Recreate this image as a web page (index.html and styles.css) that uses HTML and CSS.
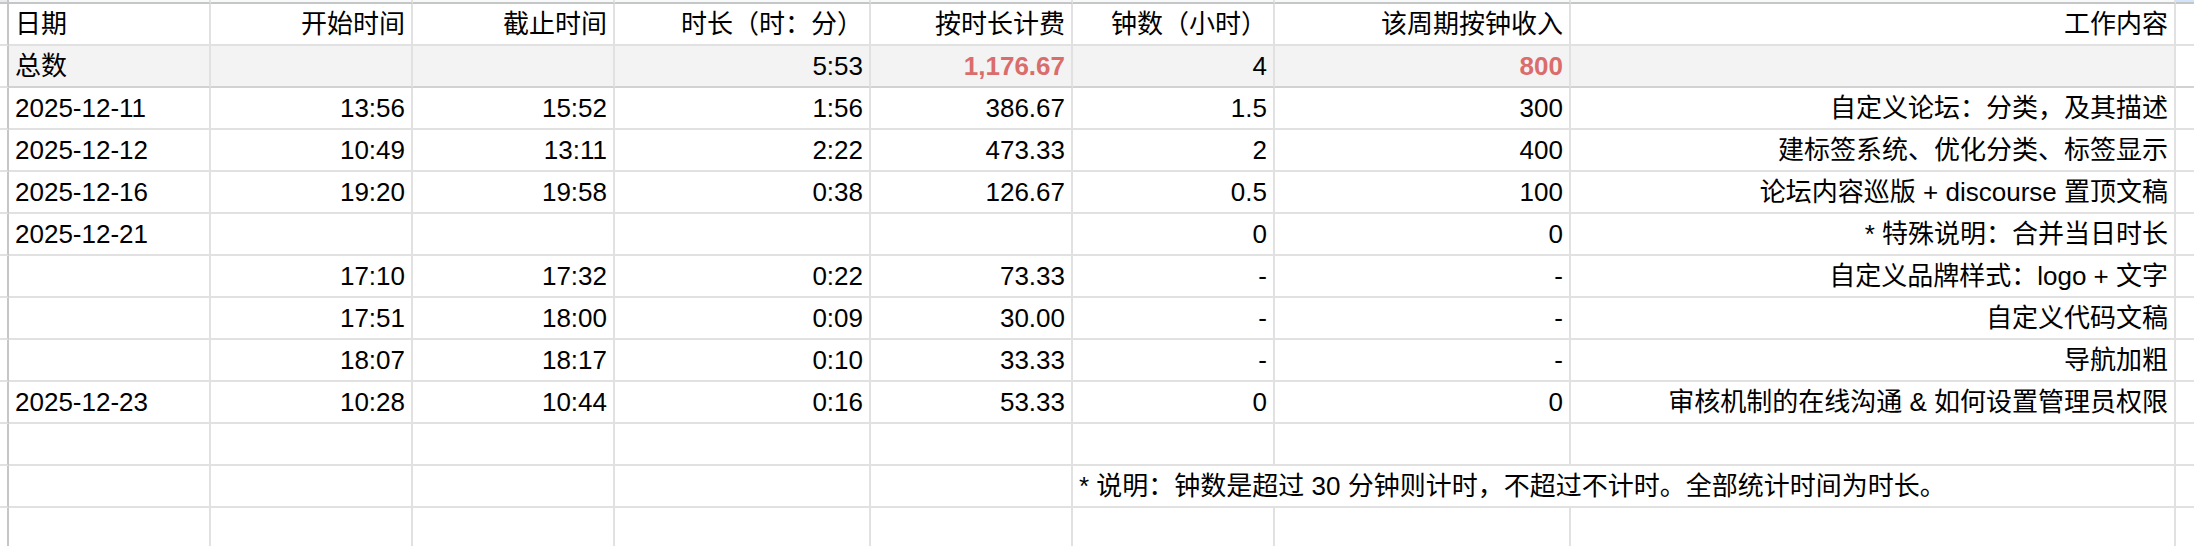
FILE: index.html
```html
<!DOCTYPE html>
<html lang="zh-CN">
<head>
<meta charset="utf-8">
<title>工时表</title>
<link rel="stylesheet" href="styles.css">
</head>
<body>
<div class="sheet">
  <div class="row colhead">
    <div class="ch corner"></div>
    <div class="ch"></div><div class="ch"></div><div class="ch"></div><div class="ch"></div>
    <div class="ch"></div><div class="ch"></div><div class="ch"></div><div class="ch"></div>
    <div class="ch sel"></div>
  </div>

  <div class="row">
    <div class="rh"></div>
    <div class="c">日期</div>
    <div class="c r">开始时间</div>
    <div class="c r">截止时间</div>
    <div class="c r">时长（时：分）</div>
    <div class="c r">按时长计费</div>
    <div class="c r">钟数（小时）</div>
    <div class="c r">该周期按钟收入</div>
    <div class="c r">工作内容</div>
    <div class="c x"></div>
  </div>

  <div class="row total">
    <div class="rh"></div>
    <div class="c g">总数</div>
    <div class="c g r"></div>
    <div class="c g r"></div>
    <div class="c g r">5:53</div>
    <div class="c g r hl">1,176.67</div>
    <div class="c g r">4</div>
    <div class="c g r hl">800</div>
    <div class="c g r"></div>
    <div class="c x"></div>
  </div>

  <div class="row">
    <div class="rh"></div>
    <div class="c">2025-12-11</div>
    <div class="c r">13:56</div>
    <div class="c r">15:52</div>
    <div class="c r">1:56</div>
    <div class="c r">386.67</div>
    <div class="c r">1.5</div>
    <div class="c r">300</div>
    <div class="c r">自定义论坛：分类，及其描述</div>
    <div class="c x"></div>
  </div>

  <div class="row">
    <div class="rh"></div>
    <div class="c">2025-12-12</div>
    <div class="c r">10:49</div>
    <div class="c r">13:11</div>
    <div class="c r">2:22</div>
    <div class="c r">473.33</div>
    <div class="c r">2</div>
    <div class="c r">400</div>
    <div class="c r">建标签系统、优化分类、标签显示</div>
    <div class="c x"></div>
  </div>

  <div class="row">
    <div class="rh"></div>
    <div class="c">2025-12-16</div>
    <div class="c r">19:20</div>
    <div class="c r">19:58</div>
    <div class="c r">0:38</div>
    <div class="c r">126.67</div>
    <div class="c r">0.5</div>
    <div class="c r">100</div>
    <div class="c r">论坛内容巡版 + discourse 置顶文稿</div>
    <div class="c x"></div>
  </div>

  <div class="row">
    <div class="rh"></div>
    <div class="c">2025-12-21</div>
    <div class="c r"></div>
    <div class="c r"></div>
    <div class="c r"></div>
    <div class="c r"></div>
    <div class="c r">0</div>
    <div class="c r">0</div>
    <div class="c r">* 特殊说明：合并当日时长</div>
    <div class="c x"></div>
  </div>

  <div class="row">
    <div class="rh"></div>
    <div class="c"></div>
    <div class="c r">17:10</div>
    <div class="c r">17:32</div>
    <div class="c r">0:22</div>
    <div class="c r">73.33</div>
    <div class="c r">-</div>
    <div class="c r">-</div>
    <div class="c r">自定义品牌样式：logo + 文字</div>
    <div class="c x"></div>
  </div>

  <div class="row">
    <div class="rh"></div>
    <div class="c"></div>
    <div class="c r">17:51</div>
    <div class="c r">18:00</div>
    <div class="c r">0:09</div>
    <div class="c r">30.00</div>
    <div class="c r">-</div>
    <div class="c r">-</div>
    <div class="c r">自定义代码文稿</div>
    <div class="c x"></div>
  </div>

  <div class="row">
    <div class="rh"></div>
    <div class="c"></div>
    <div class="c r">18:07</div>
    <div class="c r">18:17</div>
    <div class="c r">0:10</div>
    <div class="c r">33.33</div>
    <div class="c r">-</div>
    <div class="c r">-</div>
    <div class="c r">导航加粗</div>
    <div class="c x"></div>
  </div>

  <div class="row">
    <div class="rh"></div>
    <div class="c">2025-12-23</div>
    <div class="c r">10:28</div>
    <div class="c r">10:44</div>
    <div class="c r">0:16</div>
    <div class="c r">53.33</div>
    <div class="c r">0</div>
    <div class="c r">0</div>
    <div class="c r">审核机制的在线沟通 &amp; 如何设置管理员权限</div>
    <div class="c x"></div>
  </div>

  <div class="row">
    <div class="rh"></div>
    <div class="c"></div><div class="c"></div><div class="c"></div><div class="c"></div>
    <div class="c"></div><div class="c"></div><div class="c"></div><div class="c"></div>
    <div class="c x"></div>
  </div>

  <div class="row">
    <div class="rh"></div>
    <div class="c"></div><div class="c"></div><div class="c"></div><div class="c"></div>
    <div class="c"></div>
    <div class="c note">* 说明：钟数是超过 30 分钟则计时，不超过不计时。全部统计时间为时长。</div>
    <div class="c x"></div>
  </div>

  <div class="row">
    <div class="rh"></div>
    <div class="c"></div><div class="c"></div><div class="c"></div><div class="c"></div>
    <div class="c"></div><div class="c"></div><div class="c"></div><div class="c"></div>
    <div class="c x"></div>
  </div>
</div>
</body>
</html>
```

FILE: styles.css
```css
* {
  box-sizing: border-box;
}

html, body {
  margin: 0;
  padding: 0;
  background: #ffffff;
  overflow: hidden;
}

body {
  width: 2194px;
  height: 546px;
  font-family: "Liberation Sans", "Noto Sans CJK SC", sans-serif;
  font-size: 26px;
  color: #000000;
}

.sheet {
  display: flex;
  flex-direction: column;
}

.row {
  display: grid;
  grid-template-columns: 9px 202px 202px 202px 256px 202px 202px 296px 605px 1fr;
  height: 42px;
  flex: none;
}

.row.colhead {
  height: 4px;
}

.ch {
  background: #f8f9fa;
  border-bottom: 2px solid #c4c7c5;
  border-right: 2px solid #e1e1e1;
}

.ch.corner {
  background: #e8eaed;
  border-right: 2px solid #c4c7c5;
}

.ch.sel {
  background: #d3e3fd;
  border-right: none;
}

.rh {
  background: #ffffff;
  border-right: 2px solid #c4c7c5;
  border-bottom: 2px solid #e1e1e1;
}

.c {
  display: flex;
  align-items: flex-end;
  padding: 0 6px 5px 6px;
  line-height: 30px;
  white-space: nowrap;
  border-right: 2px solid #e1e1e1;
  border-bottom: 2px solid #e1e1e1;
  min-width: 0;
}

.c.r {
  justify-content: flex-end;
}

.c.x {
  border-right: none;
}

.c.g {
  background: #f3f3f3;
}

.total .c {
  border-bottom-color: #d2d2d2;
}

.hl {
  color: #da6d6b;
  font-weight: bold;
}

.note {
  grid-column: span 3;
}
```
